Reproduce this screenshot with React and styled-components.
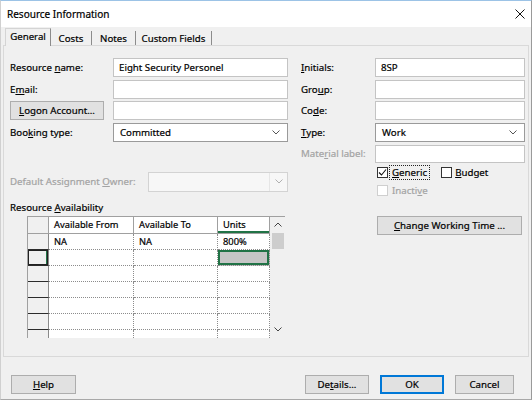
import React from "react";
import styled, { createGlobalStyle, css } from "styled-components";

const Global = createGlobalStyle`
  html, body { margin: 0; padding: 0; background: #f0f0f0; }
  body {
    font-family: "Noto Sans", "Open Sans", sans-serif;
    font-size: 9.7px;
    color: #000;
    -webkit-text-stroke-width: 0.2px;
  }
  * { box-sizing: border-box; }
`;

const Window = styled.div`
  width: 532px;
  height: 400px;
  background: #f0f0f0;
  border-top: 1px solid #9cc3e6;
  border-left: 1px solid #d0d0d0;
  border-right: 1px solid #9a9a9a;
  border-bottom: 1px solid #a8a8a8;
  display: flex;
  flex-direction: column;
  overflow: hidden;
`;

const TitleBar = styled.div`
  height: 26px;
  flex: none;
  background: #fff;
  display: flex;
  align-items: center;
  justify-content: space-between;
  padding: 0 6px 0 6px;
  font-size: 10px;
`;

const TabStrip = styled.div`
  height: 18px;
  flex: none;
  display: flex;
  align-items: flex-end;
  padding-left: 4px;
  position: relative;
  z-index: 1;
`;

const Tab = styled.div`
  width: ${(p) => p.$w}px;
  height: 14px;
  display: flex;
  align-items: center;
  justify-content: center;
  border-right: 1px solid #8c8c8c;
  white-space: nowrap;
  ${(p) =>
    p.$active &&
    css`
      height: 18px;
      margin-bottom: -1px;
      padding-bottom: 2px;
      border-left: 1px solid #d4d4d4;
      border-top: 1px solid #d4d4d4;
      background: #f0f0f0;
    `}
`;

const Panel = styled.div`
  margin: 0 2px;
  height: 312px;
  flex: none;
  border: 1px solid #d9d9d9;
  padding: 12px 0 0 6px;
  display: grid;
  grid-template-columns: 278px 224px;
  column-gap: 13px;
  align-items: start;
`;

const Column = styled.div`
  display: flex;
  flex-direction: column;
`;

const FormGrid = styled.div`
  display: grid;
  grid-template-columns: ${(p) => p.$label}px 1fr;
  grid-auto-rows: 19px;
  row-gap: 2.67px;
  align-items: center;
`;

const Label = styled.div`
  white-space: nowrap;
  color: ${(p) => (p.$disabled ? "#a3a3a3" : "#000")};
`;

const U = styled.span`
  text-decoration: underline;
  text-underline-offset: 1px;
`;

const TextBox = styled.div`
  height: 19px;
  background: #fff;
  border: 1px solid #c4c4c4;
  padding-left: 5px;
  display: flex;
  align-items: center;
  white-space: nowrap;
`;

const Select = styled.div`
  height: 19px;
  background: #fff;
  border: 1px solid #9a9a9a;
  padding: 0 7px 0 6px;
  display: flex;
  align-items: center;
  justify-content: space-between;
`;

const DisabledSelect = styled.div`
  width: 140px;
  height: 20px;
  background: #f7f7f7;
  border: 1px solid #d3d3d3;
  display: flex;
  justify-content: flex-end;
`;

const DropZone = styled.div`
  width: 18px;
  border-left: 1px solid #e6e6e6;
  display: flex;
  align-items: center;
  justify-content: center;
`;

const Button = styled.div`
  width: ${(p) => p.$w}px;
  height: 19px;
  flex: none;
  background: #e1e1e1;
  border: ${(p) => (p.$default ? "2px solid #0078d7" : "1px solid #adadad")};
  display: flex;
  align-items: center;
  justify-content: center;
  white-space: nowrap;
  ${(p) => p.$ml !== undefined && css`margin-left: ${p.$ml}px;`}
  ${(p) => p.$mt !== undefined && css`margin-top: ${p.$mt}px;`}
`;

const OwnerRow = styled.div`
  margin-top: 30px;
  height: 20px;
  display: flex;
  align-items: center;
  justify-content: space-between;
`;

const SectionLabel = styled.div`
  margin-top: 9px;
  height: 13px;
  line-height: 13px;
`;

const TableWrap = styled.div`
  margin: 2px 0 0 17px;
  width: 258px;
  height: 122px;
  display: flex;
  border-top: 1px solid #a0a0a0;
  border-left: 1px solid #a0a0a0;
  background: #fff;
  overflow: hidden;
  font-size: 9.3px;
`;

const Grid = styled.div`
  display: grid;
  grid-template-columns: 21px 85px 84px 52px;
  grid-template-rows: 17px;
  grid-auto-rows: 16px;
`;

const HeadCell = styled.div`
  border-right: 1px solid #a0a0a0;
  border-bottom: 1px solid #a0a0a0;
  padding-left: 5px;
  display: flex;
  align-items: center;
  ${(p) => p.$focus && css`box-shadow: inset 0 -2px 0 #217346;`}
`;

const RowHead = styled.div`
  background: #f0f0f0;
  border-right: 1px solid #8a8a8a;
  border-bottom: 1px solid #2b2b2b;
  ${(p) => p.$corner && css`border-bottom-color: #a0a0a0; border-right-color: #a0a0a0;`}
  ${(p) => p.$focus && css`box-shadow: inset 0 0 0 1px #222, inset -2px 0 0 #217346;`}
`;

const Cell = styled.div`
  border-right: 1px dotted #8c8c8c;
  border-bottom: 1px dotted #8c8c8c;
  padding-left: 5px;
  display: flex;
  align-items: center;
  white-space: nowrap;
  ${(p) => p.$selected && css`background: #c6c6c6; box-shadow: inset 0 0 0 2px #217346;`}
`;

const ScrollBar = styled.div`
  width: 15px;
  flex: none;
  background: #f0f0f0;
  display: flex;
  flex-direction: column;
  align-items: center;
`;

const ScrollArrow = styled.div`
  height: ${(p) => p.$h}px;
  width: 15px;
  flex: none;
  display: flex;
  align-items: center;
  justify-content: center;
`;

const Thumb = styled.div`
  width: 12px;
  height: 16px;
  flex: none;
  background: #cdcdcd;
`;

const Spacer = styled.div`
  flex: 1;
`;

const MaterialRow = styled.div`
  margin-top: 3px;
  height: 18px;
  display: grid;
  grid-template-columns: 74px 150px;
  align-items: center;
`;

const CheckRow = styled.div`
  margin-top: ${(p) => p.$mt}px;
  height: ${(p) => p.$h}px;
  padding-left: 76px;
  display: flex;
  align-items: center;
`;

const Box = styled.div`
  width: 11px;
  height: 11px;
  flex: none;
  background: #fff;
  border: 1px solid ${(p) => (p.$disabled ? "#cfcfcf" : "#333")};
  display: flex;
  align-items: center;
  justify-content: center;
`;

const CheckText = styled.div`
  margin-left: ${(p) => p.$ml ?? 3}px;
  color: ${(p) => (p.$disabled ? "#a3a3a3" : "#000")};
  ${(p) =>
    p.$focus &&
    css`
      margin-left: 1px;
      padding: 0 2px 0 2px;
      height: 15px;
      display: flex;
      align-items: center;
      border: 1px dotted #222;
    `}
`;

const Footer = styled.div`
  margin-top: 18px;
  padding: 0 17px 0 10px;
  display: flex;
  align-items: center;
  gap: 11px;
`;

const Chevron = ({ up, color = "#555" }) => (
  <svg width="8" height="5" viewBox="0 0 8 5">
    <polyline
      points={up ? "0.5,4.5 4,1 7.5,4.5" : "0.5,0.5 4,4 7.5,0.5"}
      fill="none"
      stroke={color}
      strokeWidth="1"
    />
  </svg>
);

const CloseIcon = () => (
  <svg width="10" height="10" viewBox="0 0 10 10">
    <line x1="0.5" y1="0.5" x2="9.5" y2="9.5" stroke="#111" strokeWidth="1" />
    <line x1="9.5" y1="0.5" x2="0.5" y2="9.5" stroke="#111" strokeWidth="1" />
  </svg>
);

const CheckMark = () => (
  <svg width="9" height="9" viewBox="0 0 9 9">
    <polyline points="1,4.5 3.5,7 8,1.5" fill="none" stroke="#111" strokeWidth="1.1" />
  </svg>
);

const rows = [
  { from: "NA", to: "NA", units: "800%" },
  { selected: true },
  {},
  {},
  {},
  {},
  {},
];

export default function App() {
  return (
    <>
      <Global />
      <Window>
        <TitleBar>
          <span>Resource Information</span>
          <CloseIcon />
        </TitleBar>
        <TabStrip>
          <Tab $w={46} $active>General</Tab>
          <Tab $w={41}>Costs</Tab>
          <Tab $w={44}>Notes</Tab>
          <Tab $w={76}>Custom Fields</Tab>
        </TabStrip>
        <Panel>
          <Column>
            <FormGrid $label={103}>
              <Label>Resource <U>n</U>ame:</Label>
              <TextBox>Eight Security Personel</TextBox>
              <Label>E<U>m</U>ail:</Label>
              <TextBox />
              <Button $w={94}><U>L</U>ogon Account...</Button>
              <TextBox />
              <Label>Boo<U>k</U>ing type:</Label>
              <Select>
                <span>Committed</span>
                <Chevron />
              </Select>
            </FormGrid>
            <OwnerRow>
              <Label $disabled>Default Assignment <U>O</U>wner:</Label>
              <DisabledSelect>
                <DropZone>
                  <Chevron color="#b0b0b0" />
                </DropZone>
              </DisabledSelect>
            </OwnerRow>
            <SectionLabel>Resource <U>A</U>vailability</SectionLabel>
            <TableWrap>
              <Grid>
                <RowHead $corner />
                <HeadCell>Available From</HeadCell>
                <HeadCell>Available To</HeadCell>
                <HeadCell $focus>Units</HeadCell>
                {rows.map((r, i) => (
                  <React.Fragment key={i}>
                    <RowHead $focus={r.selected} />
                    <Cell>{r.from}</Cell>
                    <Cell>{r.to}</Cell>
                    <Cell $selected={r.selected}>{r.units}</Cell>
                  </React.Fragment>
                ))}
              </Grid>
              <ScrollBar>
                <ScrollArrow $h={16}>
                  <Chevron up color="#444" />
                </ScrollArrow>
                <Thumb />
                <Spacer />
                <ScrollArrow $h={16}>
                  <Chevron color="#444" />
                </ScrollArrow>
              </ScrollBar>
            </TableWrap>
          </Column>
          <Column>
            <FormGrid $label={74}>
              <Label><U>I</U>nitials:</Label>
              <TextBox>8SP</TextBox>
              <Label>Gro<U>u</U>p:</Label>
              <TextBox />
              <Label>Co<U>d</U>e:</Label>
              <TextBox />
              <Label><U>T</U>ype:</Label>
              <Select>
                <span>Work</span>
                <Chevron />
              </Select>
            </FormGrid>
            <MaterialRow>
              <Label $disabled>Mate<U>r</U>ial label:</Label>
              <TextBox style={{ height: 18 }} />
            </MaterialRow>
            <CheckRow $mt={2} $h={15}>
              <Box>
                <CheckMark />
              </Box>
              <CheckText $focus><U>G</U>eneric</CheckText>
              <Box style={{ marginLeft: 11 }} />
              <CheckText><U>B</U>udget</CheckText>
            </CheckRow>
            <CheckRow $mt={4} $h={14}>
              <Box $disabled />
              <CheckText $disabled $ml={4}>Inacti<U>v</U>e</CheckText>
            </CheckRow>
            <Button $w={145} $ml={76} $mt={18}>
              <U>C</U>hange Working Time ...
            </Button>
          </Column>
        </Panel>
        <Footer>
          <Button $w={65}><U>H</U>elp</Button>
          <Spacer />
          <Button $w={64}>De<U>t</U>ails...</Button>
          <Button $w={64} $default>OK</Button>
          <Button $w={59}>Cancel</Button>
        </Footer>
      </Window>
    </>
  );
}
